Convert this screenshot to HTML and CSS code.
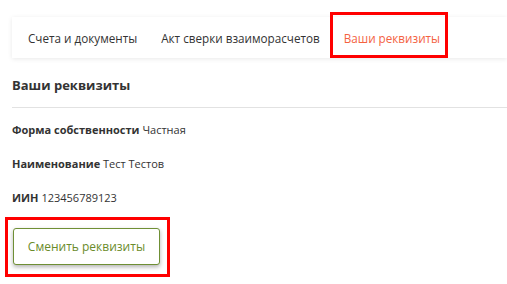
FILE: index.html
```html
<!DOCTYPE html>
<html>
<head>
    <title>Ваши реквизиты</title>
    <link rel="stylesheet" href="styles.css">
</head>
<body>
    <div class="page">
        <div class="tabs">
            <div class="tab">Счета и документы</div>
            <div class="tab">Акт сверки взаиморасчетов</div>
            <div class="tab active">Ваши реквизиты</div>
        </div>

        <h2>Ваши реквизиты</h2>

        <div class="row"><strong>Форма собственности</strong> Частная</div>
        <div class="row"><strong>Наименование</strong> Тест Тестов</div>
        <div class="row"><strong>ИИН</strong> 123456789123</div>

        <div class="mark">
            <button class="btn">Сменить реквизиты</button>
        </div>
    </div>
</body>
</html>
```

FILE: styles.css
```css
body {
    margin: 0;
    background: white;
    color: #333;
    font-family: "Open Sans", Arial, sans-serif;
}
.page {
    padding-left: 12px;
    padding-top: 17px;
}
.tabs {
    display: flex;
    height: 41px;
    background: white;
    box-shadow: 0 1px 5px rgba(0, 0, 0, 0.09);
    padding-left: 4px;
}
.tab {
    display: flex;
    align-items: center;
    padding: 0 12px;
    font-size: 11.7px;
    color: #333;
}
.tab.active {
    box-sizing: border-box;
    height: 46px;
    margin-top: -5px;
    margin-left: -2px;
    padding: 5px 5px 0 11px;
    border: 3px solid #f00;
    color: #f4623f;
}
h2 {
    margin: 0;
    padding: 18px 0 13px;
    font-size: 13px;
    line-height: 18px;
    font-weight: bold;
    color: #333;
    border-bottom: 1px solid #e2e2e2;
}
.row {
    font-size: 11px;
    line-height: 15px;
    margin-top: 14px;
}
.row + .row {
    margin-top: 19px;
}
.row strong {
    font-weight: bold;
}
.mark {
    display: inline-block;
    margin-left: -7px;
    margin-top: 12px;
    border: 3px solid #f00;
    padding: 8px 7px 9px 5px;
}
.btn {
    display: block;
    width: 147px;
    height: 37px;
    background: white;
    border: 1px solid #6f8f35;
    border-radius: 3px;
    box-shadow: 0 2px 4px rgba(0, 0, 0, 0.3);
    color: #6a8b2a;
    font-family: "Open Sans", Arial, sans-serif;
    font-size: 12px;
}
```
